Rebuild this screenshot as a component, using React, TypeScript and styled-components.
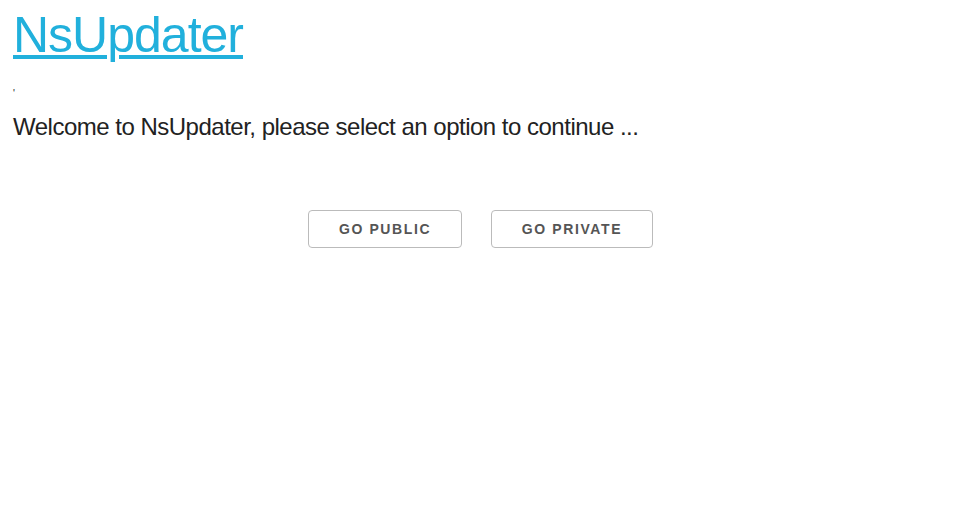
import React from "react";
import styled, { createGlobalStyle } from "styled-components";

const Global = createGlobalStyle`
  html, body { margin: 0; padding: 0; background: #fff; }
  body { font-family: "Liberation Sans", Arial, sans-serif; }
`;

const Page = styled.div`
  padding: 0 13px;
  display: flex;
  flex-direction: column;
`;

const Title = styled.h1`
  margin: 6px 0 0 0;
  font-size: 50px;
  font-weight: 400;
  line-height: 58px;
  letter-spacing: -1px;
`;

const TitleLink = styled.a`
  color: #21b0dc;
  text-decoration: underline;
  text-decoration-thickness: 4px;
  text-underline-offset: 3px;
`;

const Mark = styled.div`
  margin-top: 24px;
  font-size: 10px;
  line-height: 12px;
  color: #222;
`;

const Welcome = styled.p`
  margin: 12px 0 0 0;
  font-size: 24px;
  line-height: 30px;
  color: #222;
  letter-spacing: -0.5px;
`;

const Actions = styled.div`
  display: flex;
  gap: 29px;
  margin-top: 68px;
  padding-left: 295px;
`;

const Button = styled.button<{ $w: number }>`
  width: ${(p) => p.$w}px;
  height: 38px;
  background: #fff;
  border: 1px solid #bbb;
  border-radius: 4px;
  font-family: "Liberation Sans", Arial, sans-serif;
  font-weight: 700;
  font-size: 14px;
  letter-spacing: 1.6px;
  color: #555;
  text-transform: uppercase;
  cursor: pointer;
  padding: 0;
`;

export default function App() {
  return (
    <>
      <Global />
      <Page>
        <Title>
          <TitleLink href="#">NsUpdater</TitleLink>
        </Title>
        <Mark>'</Mark>
        <Welcome>Welcome to NsUpdater, please select an option to continue ...</Welcome>
        <Actions>
          <Button $w={154}>Go Public</Button>
          <Button $w={162}>Go Private</Button>
        </Actions>
      </Page>
    </>
  );
}
